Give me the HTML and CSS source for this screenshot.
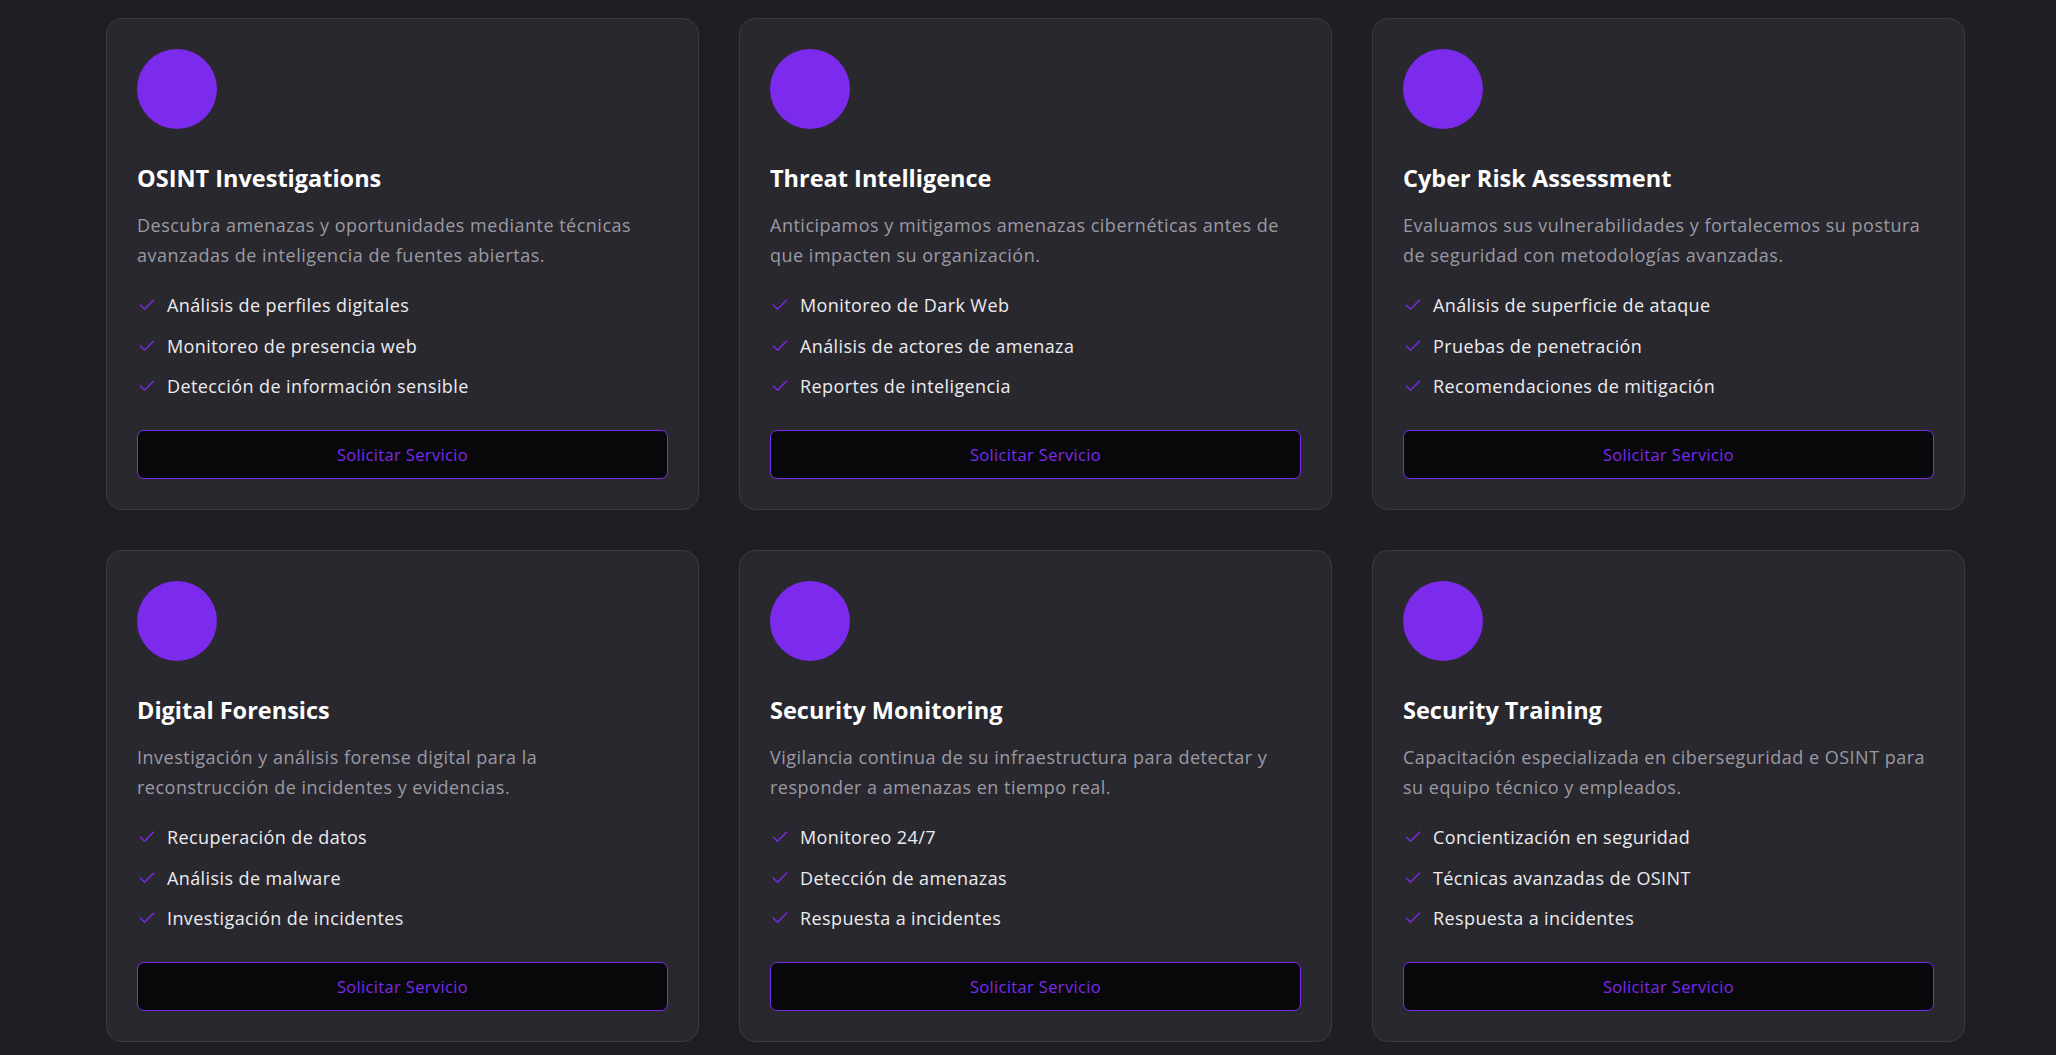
FILE: index.html
```html
<!DOCTYPE html>
<html lang="es">
<head>
<meta charset="utf-8">
<title>Servicios</title>
<link rel="stylesheet" href="styles.css">
</head>
<body>
<main class="services">
  <div class="grid">
    <article class="card">
      <div class="icon"></div>
      <h3 class="title">OSINT Investigations</h3>
      <p class="desc">Descubra amenazas y oportunidades mediante técnicas avanzadas de inteligencia de fuentes abiertas.</p>
      <ul class="features">
        <li><svg class="check" viewBox="0 0 24 24"><path d="M20 6 9 17l-5-5"/></svg>Análisis de perfiles digitales</li>
        <li><svg class="check" viewBox="0 0 24 24"><path d="M20 6 9 17l-5-5"/></svg>Monitoreo de presencia web</li>
        <li><svg class="check" viewBox="0 0 24 24"><path d="M20 6 9 17l-5-5"/></svg>Detección de información sensible</li>
      </ul>
      <button class="btn">Solicitar Servicio</button>
    </article>
    <article class="card">
      <div class="icon"></div>
      <h3 class="title">Threat Intelligence</h3>
      <p class="desc">Anticipamos y mitigamos amenazas cibernéticas antes de que impacten su organización.</p>
      <ul class="features">
        <li><svg class="check" viewBox="0 0 24 24"><path d="M20 6 9 17l-5-5"/></svg>Monitoreo de Dark Web</li>
        <li><svg class="check" viewBox="0 0 24 24"><path d="M20 6 9 17l-5-5"/></svg>Análisis de actores de amenaza</li>
        <li><svg class="check" viewBox="0 0 24 24"><path d="M20 6 9 17l-5-5"/></svg>Reportes de inteligencia</li>
      </ul>
      <button class="btn">Solicitar Servicio</button>
    </article>
    <article class="card">
      <div class="icon"></div>
      <h3 class="title">Cyber Risk Assessment</h3>
      <p class="desc">Evaluamos sus vulnerabilidades y fortalecemos su postura de seguridad con metodologías avanzadas.</p>
      <ul class="features">
        <li><svg class="check" viewBox="0 0 24 24"><path d="M20 6 9 17l-5-5"/></svg>Análisis de superficie de ataque</li>
        <li><svg class="check" viewBox="0 0 24 24"><path d="M20 6 9 17l-5-5"/></svg>Pruebas de penetración</li>
        <li><svg class="check" viewBox="0 0 24 24"><path d="M20 6 9 17l-5-5"/></svg>Recomendaciones de mitigación</li>
      </ul>
      <button class="btn">Solicitar Servicio</button>
    </article>
    <article class="card">
      <div class="icon"></div>
      <h3 class="title">Digital Forensics</h3>
      <p class="desc">Investigación y análisis forense digital para la reconstrucción de incidentes y evidencias.</p>
      <ul class="features">
        <li><svg class="check" viewBox="0 0 24 24"><path d="M20 6 9 17l-5-5"/></svg>Recuperación de datos</li>
        <li><svg class="check" viewBox="0 0 24 24"><path d="M20 6 9 17l-5-5"/></svg>Análisis de malware</li>
        <li><svg class="check" viewBox="0 0 24 24"><path d="M20 6 9 17l-5-5"/></svg>Investigación de incidentes</li>
      </ul>
      <button class="btn">Solicitar Servicio</button>
    </article>
    <article class="card">
      <div class="icon"></div>
      <h3 class="title">Security Monitoring</h3>
      <p class="desc">Vigilancia continua de su infraestructura para detectar y responder a amenazas en tiempo real.</p>
      <ul class="features">
        <li><svg class="check" viewBox="0 0 24 24"><path d="M20 6 9 17l-5-5"/></svg>Monitoreo 24/7</li>
        <li><svg class="check" viewBox="0 0 24 24"><path d="M20 6 9 17l-5-5"/></svg>Detección de amenazas</li>
        <li><svg class="check" viewBox="0 0 24 24"><path d="M20 6 9 17l-5-5"/></svg>Respuesta a incidentes</li>
      </ul>
      <button class="btn">Solicitar Servicio</button>
    </article>
    <article class="card">
      <div class="icon"></div>
      <h3 class="title">Security Training</h3>
      <p class="desc">Capacitación especializada en ciberseguridad e OSINT para su equipo técnico y empleados.</p>
      <ul class="features">
        <li><svg class="check" viewBox="0 0 24 24"><path d="M20 6 9 17l-5-5"/></svg>Concientización en seguridad</li>
        <li><svg class="check" viewBox="0 0 24 24"><path d="M20 6 9 17l-5-5"/></svg>Técnicas avanzadas de OSINT</li>
        <li><svg class="check" viewBox="0 0 24 24"><path d="M20 6 9 17l-5-5"/></svg>Respuesta a incidentes</li>
      </ul>
      <button class="btn">Solicitar Servicio</button>
    </article>
  </div>
</main>
</body>
</html>
```

FILE: styles.css
```css
html, body {
  margin: 0;
  padding: 0;
  background: #1f1e24;
  font-family: "Open Sans", "Noto Sans", sans-serif;
  color: #fff;
}

.services {
  padding: 18px 0 0 106px;
}

.grid {
  display: grid;
  grid-template-columns: repeat(3, 593px);
  column-gap: 40px;
  row-gap: 40px;
}

.card {
  display: flex;
  flex-direction: column;
  background: #29282f;
  border: 1px solid #3b3a42;
  border-radius: 16px;
  padding: 30px;
}

.icon {
  width: 80px;
  height: 80px;
  border-radius: 50%;
  background: #7c2aec;
  margin-bottom: 33px;
}

.title {
  margin: 0 0 16px;
  font-size: 23.5px;
  line-height: 32px;
  font-weight: 700;
  color: #ffffff;
}

.desc {
  margin: 0 0 21px;
  font-size: 18px;
  line-height: 30px;
  letter-spacing: 0.5px;
  color: #9b9aa3;
}

.features {
  list-style: none;
  margin: 0 0 30px;
  padding: 0;
  display: flex;
  flex-direction: column;
  gap: 12.5px;
}

.features li {
  display: flex;
  align-items: center;
  gap: 10px;
  font-size: 18px;
  line-height: 28px;
  letter-spacing: 0.4px;
  color: #ececef;
}

.check {
  width: 20px;
  height: 20px;
  flex: none;
  fill: none;
  stroke: #7c2aec;
  stroke-width: 1.6;
  stroke-linecap: round;
  stroke-linejoin: round;
}

.btn {
  display: block;
  width: 100%;
  height: 49px;
  background: #08080b;
  border: 1px solid #7c2aec;
  border-radius: 7px;
  color: #7c2aec;
  font-family: inherit;
  font-size: 16.5px;
  letter-spacing: 0.35px;
  cursor: pointer;
}
```
